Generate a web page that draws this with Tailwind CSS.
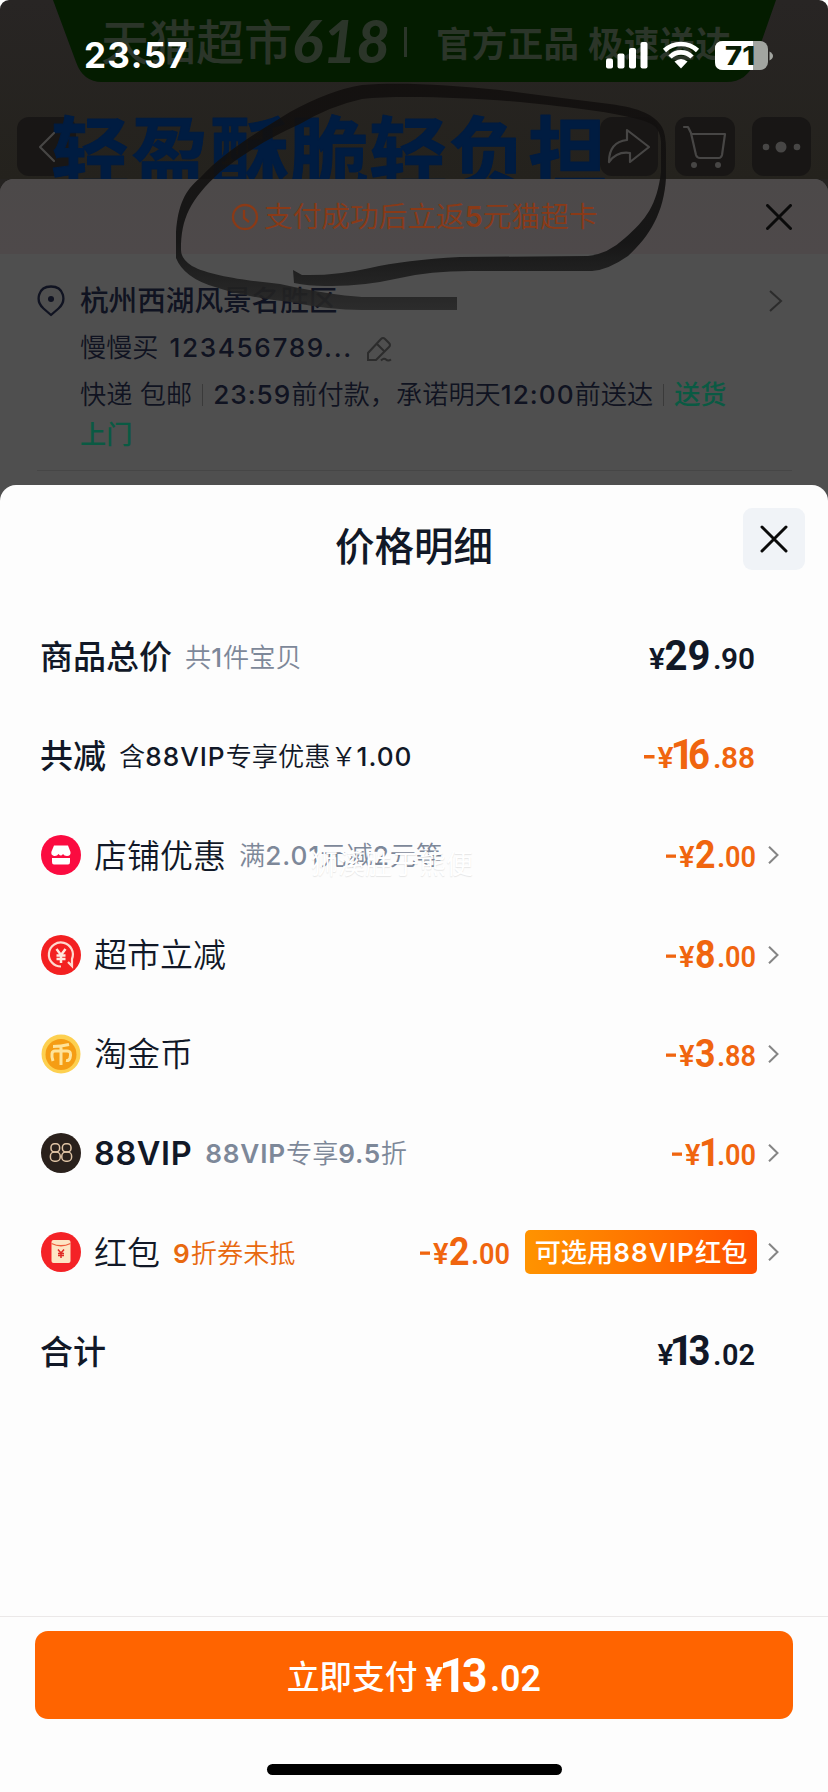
<!DOCTYPE html>
<html lang="zh-CN">
<head>
<meta charset="utf-8">
<title>价格明细</title>
<script src="https://cdn.jsdelivr.net/npm/@tailwindcss/browser@4"></script>
</head>
<body class="bg-white">
<div class="relative flex h-[1792px] w-[828px] flex-col overflow-hidden font-['Inter','Noto_Sans_CJK_SC',sans-serif]">

  <!-- dimmed product page -->
  <header class="relative h-[179px] shrink-0 overflow-hidden rounded-t-[9px] bg-linear-to-b from-[#282524] to-[#24221d]">
    <svg class="absolute inset-0" width="828" height="179" viewBox="0 0 828 179">
      <path d="M53 0L76 62Q83 82 102 82H726Q748 82 755 60L776 0Z" fill="#041c00"/>
      <g fill="#2b3529" font-family="'Noto Sans CJK SC',sans-serif" font-weight="500">
        <text x="101" y="60" font-size="48" textLength="191">天猫超市</text>
        <text x="292" y="63" font-size="59" font-style="italic" font-weight="900" font-family="Lato,sans-serif" textLength="98" lengthAdjust="spacingAndGlyphs">618</text>
        <rect x="404" y="27" width="3" height="30"/>
        <text x="436" y="57" font-size="35.5" font-weight="700" textLength="295">官方正品 极速送达</text>
      </g>
      <g fill="#131212" fill-opacity=".72">
        <rect x="17" y="117" width="59" height="59" rx="12"/>
        <rect x="600" y="117" width="58" height="59" rx="12"/>
        <rect x="675" y="117" width="60" height="59" rx="12"/>
        <rect x="752" y="117" width="59" height="59" rx="12"/>
      </g>
      <text x="51" y="183" font-size="79" font-weight="700" font-family="'Noto Sans CJK SC',sans-serif" textLength="556" fill="#001c41" stroke="#001c41" stroke-width="1" stroke-linejoin="round">轻盈酥脆轻负担</text>
      <g fill="none" stroke="#474645" stroke-width="2.200" stroke-linejoin="round" stroke-linecap="round">
        <path d="M54 133L40 147L54 161"/>
        <path d="M627 130L649 147L630 162V153Q617 151 609 162Q609 142 627 140Z"/>
        <path d="M684 127H688L691 133L696 155Q697 158 700 158H719Q721 158 722 155L725 134H691"/>
      </g>
      <g fill="#474645"><circle cx="694" cy="165" r="3"/><circle cx="718" cy="165" r="3"/><circle cx="766" cy="147" r="3.3"/><circle cx="781" cy="147" r="5.5"/><circle cx="797" cy="147" r="3.3"/></g>
    </svg>
    <div class="relative flex h-[111px] items-center justify-between pr-[55px] pl-[84px] text-white">
      <span class="text-[35px] leading-none font-bold tracking-[1.1px]">23:57</span>
      <svg width="167" height="30" viewBox="0 0 167 30" fill="#fff">
        <rect x="0" y="17.500" width="7" height="10" rx="2"/><rect x="11.500" y="12.500" width="7" height="15" rx="2"/><rect x="23" y="7" width="7" height="20.500" rx="2"/><rect x="34.500" y="1" width="7" height="26.500" rx="2"/>
        <g fill="none" stroke="#fff" stroke-width="4.600"><path d="M58.500 9.500A24 24 0 0 1 91.500 9.500"/><path d="M64 16A15.500 15.500 0 0 1 86 16"/></g>
        <path d="M68.500 20.500Q75 15.500 81.500 20.500L75 27.500Z"/>
        <path d="M163.500 10.500Q167 12.500 167 15T163.500 19.500Z" fill="#a2a5a0"/>
        <rect x="109" y="0" width="53" height="29" rx="8" fill="#a2a5a0"/>
        <path d="M147 0H117Q109 0 109 8V21Q109 29 117 29H147Z"/>
        <text x="119" y="23.500" font-size="26" font-weight="800" font-family="Inter,sans-serif" fill="#0a1f06" textLength="30" lengthAdjust="spacingAndGlyphs">71</text>
      </svg>
    </div>
  </header>

  <section class="h-[330px] shrink-0 bg-[#252321]">
    <div class="h-full rounded-t-[14px] bg-[#4f4f4f]">
      <div class="flex h-[75px] items-center rounded-t-[14px] bg-linear-to-b from-[#4c4949] to-[#4e494a] pr-[36px] pl-[231px] text-[#8a3a17]">
        <svg width="28" height="28" viewBox="0 0 28 28" fill="none" stroke="currentColor" stroke-width="2.300"><circle cx="14" cy="14" r="12"/><path d="M13 7V15L18 19"/></svg>
        <span class="ml-[5px] pt-px text-[28.700px] leading-none font-[350] whitespace-nowrap">支付成功后立返<b class="font-semibold">5</b>元猫超卡</span>
        <svg class="ml-auto" width="26" height="26" viewBox="0 0 26 26" stroke="#0a0a0a" stroke-width="3" stroke-linecap="round"><path d="M1.500 1.500L24.500 24.500M24.500 1.500L1.500 24.500"/></svg>
      </div>
      <div class="ml-[37px] flex h-[217px] w-[755px] border-b border-[#464646] pt-[23px] text-[#101321]">
        <svg class="mt-[8px]" width="28" height="32" viewBox="0 0 28 32" fill="none" stroke="currentColor" stroke-width="2.300" stroke-linejoin="round"><path d="M14 30L6.500 23.500C-2 16 1 1.500 14 1.500S30 16 21.500 23.500Z"/><circle cx="14" cy="14" r="3" fill="currentColor" stroke="none"/></svg>
        <div class="ml-[15px] flex-1">
          <div class="flex h-[48px] items-center text-[28.600px] leading-none font-medium">杭州西湖风景名胜区
            <svg class="mr-[9px] ml-auto" width="14" height="22" viewBox="0 0 14 22" fill="none" stroke="#2c2c2c" stroke-width="2"><path d="M1 1L12 11L1 21"/></svg>
          </div>
          <div class="flex h-[47px] items-center text-[26.200px] leading-none font-[350]">慢慢买<span class="ml-[11px] font-medium tracking-[1.600px]">123456789...</span>
            <svg class="ml-[13px]" width="26" height="26" viewBox="0 0 26 26" fill="none" stroke="#2c2c2c" stroke-width="2"><path d="M2 24V17L15 3Q17 1 19 3L23 7Q25 9 23 11L10 24ZM11 8L18 15M15 24.500Q18 21.500 20 23.500T25 23.500"/></svg>
          </div>
          <div class="flex h-[46px] items-center text-[26.200px] leading-none font-[350] whitespace-nowrap">快递 包邮<i class="mx-[10px] h-[22px] w-px bg-[#3a3a3a]"></i><span><b class="font-medium tracking-[1px]">23:59</b>前付款，承诺明天<b class="font-medium tracking-[1px]">12:00</b>前送达</span><i class="mx-[10px] h-[22px] w-px bg-[#3a3a3a]"></i><span class="font-medium text-[#0a5a43]">送货</span></div>
          <div class="pt-[4px] text-[26.200px] leading-none font-medium text-[#0a5a43]">上门</div>
        </div>
      </div>
    </div>
  </section>

  <!-- hand-drawn loop over the notice -->
  <svg class="absolute top-0 left-0" width="828" height="485" viewBox="0 0 828 485" fill="none">
    <defs><linearGradient id="ink" x1="0" y1="84" x2="0" y2="310" gradientUnits="userSpaceOnUse"><stop offset="0" stop-color="#120f0e"/><stop offset=".7" stop-color="#111"/><stop offset="1" stop-color="#282828"/></linearGradient></defs>
    <path fill="url(#ink)" fill-opacity=".9" fill-rule="evenodd" d="M293 270L302 275Q335 276 370 268T460 257L588 256Q608 254 625 238C646 220 657 205 661 172L661 142Q660 127 649 123C630 114 570 107 520 102C470 98 400 95 362 99Q330 106 300 124Q255 144 220 172C190 200 181 218 181 250Q181 259 192 266C210 276 250 281 280 284Q330 295 362 297H457V310H362Q330 310 290 302Q245 297 215 287Q184 278 176 258V232C178 205 185 190 200 178C225 150 265 128 290 112Q330 90 362 85C400 82 450 85 500 90Q560 98 610 104C640 108 655 115 662 127Q666 134 666 150V178C664 212 650 236 628 256Q608 270 592 271H470Q430 271 400 278Q360 287 325 286Q308 286 294 283Z"/>
  </svg>

  <!-- price sheet -->
  <main class="absolute inset-x-0 top-[485px] flex h-[1307px] flex-col rounded-t-[16px] bg-[#fdfdfd] text-[#111827]">
    <div class="grid h-[122px] shrink-0 grid-cols-[1fr_auto_1fr] items-center px-[23px]">
      <span></span>
      <h1 class="pt-[4px] text-[39.500px] leading-none font-medium">价格明细</h1>
      <div class="mb-[15px] flex h-[62px] w-[62px] items-center justify-center justify-self-end rounded-[9px] bg-[#f0f3f7]">
        <svg width="28" height="28" viewBox="0 0 28 28" stroke="#0a0a0a" stroke-width="3" stroke-linecap="round"><path d="M2 2L26 26M26 2L2 26"/></svg>
      </div>
    </div>

    <div class="flex flex-col pr-[49px] pl-[41px] whitespace-nowrap">
      <div class="flex h-[99.300px] items-center leading-none">
        <span class="-ml-px pt-[2px] text-[33px] font-medium">商品总价</span>
        <span class="ml-[13px] pt-[2px] text-[26.200px] font-[350] text-[#7d8899]">共<b class="font-medium tracking-[1px]">1</b>件宝贝</span>
        <svg class="mr-[24px] ml-auto overflow-visible" width="110" height="40" viewBox="0 1 110 40" fill="currentColor" font-family="Roboto" font-weight="600" font-size="30"><text x="4" y="33" textLength="16" lengthAdjust="spacingAndGlyphs">¥</text><text x="19.500" y="34" font-size="42" font-weight="700" textLength="46" lengthAdjust="spacingAndGlyphs">29</text><text x="68" y="33">.</text><text x="76" y="33" textLength="34" lengthAdjust="spacingAndGlyphs">90</text></svg>
      </div>
      <div class="flex h-[99.300px] items-center leading-none">
        <span class="-ml-px pt-[2px] text-[33px] font-medium">共减</span>
        <span class="ml-[13px] pt-[2px] text-[26.200px] font-[350]">含<b class="font-medium tracking-[1px]">88VIP</b>专享优惠￥<b class="font-medium tracking-[1px]">1.00</b></span>
        <svg class="mr-[24px] ml-auto overflow-visible text-[#f0650f]" width="114" height="40" viewBox="-4 1 114 40" fill="currentColor" font-family="Roboto" font-weight="600" font-size="30"><rect x="-1" y="20" width="10.500" height="3.500"/><text x="12.500" y="33" textLength="16" lengthAdjust="spacingAndGlyphs">¥</text><text x="25.500" y="34" font-size="42" font-weight="700">1</text><text x="43" y="34" font-size="42" font-weight="700" textLength="22" lengthAdjust="spacingAndGlyphs">6</text><text x="68" y="33">.</text><text x="76" y="33" textLength="34" lengthAdjust="spacingAndGlyphs">88</text></svg>
      </div>
      <div class="relative flex h-[99.300px] items-center leading-none">
        <svg width="40" height="40" viewBox="0 0 40 40"><circle cx="20" cy="20" r="20" fill="#fb0b40"/><path d="M13 10.500H27L29.500 17Q30 21 26 21Q23 21 22 19Q20 22 17.500 19Q16 21.500 13 21Q9.500 20 10.500 16.500ZM11 23H29V27Q29 29.500 27 29.500H13Q11 29.500 11 27Z" fill="#fff"/></svg>
        <span class="ml-[13px] pt-[2px] text-[33px] font-[350]">店铺优惠</span>
        <span class="ml-[13px] pt-[2px] text-[26.200px] font-[350] text-[#7d8899]">满<b class="font-medium tracking-[1px]">2.01</b>元减<b class="font-medium tracking-[1px]">2</b>元等</span>
        <span class="absolute top-[45px] left-[270px] text-[27px] font-normal text-white [text-shadow:0_1px_1px_#00000018]">狮溪胜于熊便</span>
        <svg class="ml-auto overflow-visible text-[#f0650f]" width="90" height="40" viewBox="0 1 90 40" fill="currentColor" font-family="Roboto" font-weight="600" font-size="29"><rect x="0" y="20.500" width="10" height="3.300"/><text x="13" y="32.500" textLength="15.500" lengthAdjust="spacingAndGlyphs">¥</text><text x="29" y="34" font-size="39" font-weight="700" textLength="20.500" lengthAdjust="spacingAndGlyphs">2</text><text x="51" y="32.500">.</text><text x="59" y="32.500" textLength="31" lengthAdjust="spacingAndGlyphs">00</text></svg>
        <svg class="ml-[12px]" width="11" height="18" viewBox="0 0 11 18" fill="none" stroke="#858585" stroke-width="2"><path d="M1 .7L9.500 9L1 17.300"/></svg>
      </div>
      <div class="flex h-[99.300px] items-center leading-none">
        <svg width="40" height="40" viewBox="0 0 40 40"><circle cx="20" cy="20" r="20" fill="#f32021"/><path d="M20 31.500A12 12 0 1 1 31 24V31L27 27" fill="none" stroke="#ffd9cf" stroke-width="2.200"/><path d="M15.500 14L20 20L24.500 14M15.500 20.500H24.500M15.500 24H24.500M20 20V28" fill="none" stroke="#ffe8df" stroke-width="2.500"/></svg>
        <span class="ml-[13px] pt-[2px] text-[33px] font-[350]">超市立减</span>
        <svg class="ml-auto overflow-visible text-[#f0650f]" width="90" height="40" viewBox="0 1 90 40" fill="currentColor" font-family="Roboto" font-weight="600" font-size="29"><rect x="0" y="20.500" width="10" height="3.300"/><text x="13" y="32.500" textLength="15.500" lengthAdjust="spacingAndGlyphs">¥</text><text x="29" y="34" font-size="39" font-weight="700" textLength="20.500" lengthAdjust="spacingAndGlyphs">8</text><text x="51" y="32.500">.</text><text x="59" y="32.500" textLength="31" lengthAdjust="spacingAndGlyphs">00</text></svg>
        <svg class="ml-[12px]" width="11" height="18" viewBox="0 0 11 18" fill="none" stroke="#858585" stroke-width="2"><path d="M1 .7L9.500 9L1 17.300"/></svg>
      </div>
      <div class="flex h-[99.300px] items-center leading-none">
        <svg width="40" height="40" viewBox="0 0 40 40"><circle cx="20" cy="20" r="19.500" fill="#fdd050"/><circle cx="20" cy="20.500" r="15.500" fill="#f59d14"/><path d="M12 12.500Q20 12.500 28 10.500M20 12V31M12 27Q9 17 14 17H26Q31 17 29 24Q28 27 25 26.500" fill="none" stroke="#fee39a" stroke-width="3"/></svg>
        <span class="ml-[13px] pt-[2px] text-[33px] font-[350]">淘金币</span>
        <svg class="ml-auto overflow-visible text-[#f0650f]" width="90" height="40" viewBox="0 1 90 40" fill="currentColor" font-family="Roboto" font-weight="600" font-size="29"><rect x="0" y="20.500" width="10" height="3.300"/><text x="13" y="32.500" textLength="15.500" lengthAdjust="spacingAndGlyphs">¥</text><text x="29" y="34" font-size="39" font-weight="700" textLength="20.500" lengthAdjust="spacingAndGlyphs">3</text><text x="51" y="32.500">.</text><text x="59" y="32.500" textLength="31" lengthAdjust="spacingAndGlyphs">88</text></svg>
        <svg class="ml-[12px]" width="11" height="18" viewBox="0 0 11 18" fill="none" stroke="#858585" stroke-width="2"><path d="M1 .7L9.500 9L1 17.300"/></svg>
      </div>
      <div class="flex h-[99.300px] items-center leading-none">
        <svg width="40" height="40" viewBox="0 0 40 40"><circle cx="20" cy="20" r="20" fill="#2a211c"/><g fill="none" stroke="#dfc3a4" stroke-width="1.500"><rect x="10" y="10.700" width="8.600" height="8.300" rx="3.500"/><rect x="9.400" y="19" width="9.800" height="9.200" rx="4"/><rect x="21.400" y="10.700" width="8.600" height="8.300" rx="3.500"/><rect x="20.800" y="19" width="9.800" height="9.200" rx="4"/></g></svg>
        <span class="ml-[13px] pt-[2px] text-[32.500px] font-semibold tracking-[.6px]">88VIP</span>
        <span class="ml-[13px] pt-[2px] text-[26.200px] font-[350] text-[#7d8899]"><b class="font-semibold tracking-[.8px]">88VIP</b>专享<b class="font-semibold tracking-[.6px]">9.5</b>折</span>
        <svg class="ml-auto overflow-visible text-[#f0650f]" width="90" height="40" viewBox="0 1 90 40" fill="currentColor" font-family="Roboto" font-weight="600" font-size="29"><rect x="6" y="20.500" width="10" height="3.300"/><text x="19" y="32.500" textLength="15.500" lengthAdjust="spacingAndGlyphs">¥</text><text x="33" y="34" font-size="39" font-weight="700" textLength="21" lengthAdjust="spacingAndGlyphs">1</text><text x="51" y="32.500">.</text><text x="59" y="32.500" textLength="31" lengthAdjust="spacingAndGlyphs">00</text></svg>
        <svg class="ml-[12px]" width="11" height="18" viewBox="0 0 11 18" fill="none" stroke="#858585" stroke-width="2"><path d="M1 .7L9.500 9L1 17.300"/></svg>
      </div>
      <div class="flex h-[99.300px] items-center leading-none">
        <svg width="40" height="40" viewBox="0 0 40 40"><circle cx="20" cy="20" r="20" fill="#f42226"/><rect x="10.500" y="8" width="19" height="23" rx="2" fill="#fde5c4"/><path d="M10.500 11.500Q20 16 29.500 11.500" fill="none" stroke="#ee5a3a" stroke-width="1.300"/><path d="M17 17.500L20 21L23 17.500M17 21.500H23M17 23.500H23M20 21V26" fill="none" stroke="#e02a25" stroke-width="1.500"/></svg>
        <span class="ml-[13px] pt-[2px] text-[33px] font-[350]">红包</span>
        <span class="ml-[13px] pt-[3px] text-[26.200px] font-[350] text-[#e8690f]"><b class="font-semibold tracking-[1px]">9</b>折券未抵</span>
        <svg class="ml-auto overflow-visible text-[#f0650f]" width="90" height="40" viewBox="0 1 90 40" fill="currentColor" font-family="Roboto" font-weight="600" font-size="29"><rect x="0" y="20.500" width="10" height="3.300"/><text x="13" y="32.500" textLength="15.500" lengthAdjust="spacingAndGlyphs">¥</text><text x="29" y="34" font-size="39" font-weight="700" textLength="20.500" lengthAdjust="spacingAndGlyphs">2</text><text x="51" y="32.500">.</text><text x="59" y="32.500" textLength="31" lengthAdjust="spacingAndGlyphs">00</text></svg>
        <span class="ml-[15px] flex h-[44px] w-[232px] items-center justify-center rounded-[5px] bg-linear-to-r from-[#ff9300] to-[#ff4e00] pt-px text-[26.200px] font-medium text-white">可选用<b class="font-semibold tracking-[1px]">88VIP</b>红包</span>
        <svg class="ml-[11px]" width="11" height="18" viewBox="0 0 11 18" fill="none" stroke="#858585" stroke-width="2"><path d="M1 .7L9.500 9L1 17.300"/></svg>
      </div>
      <div class="flex h-[99.300px] items-center leading-none">
        <span class="-ml-px pt-[2px] text-[33px] font-medium">合计</span>
        <svg class="mr-[24px] ml-auto overflow-visible" width="110" height="40" viewBox="0 1 110 40" fill="currentColor" font-family="Roboto" font-weight="600" font-size="30"><text x="12.500" y="33.500" textLength="16" lengthAdjust="spacingAndGlyphs">¥</text><text x="24.500" y="34" font-size="42" font-weight="700">1</text><text x="43.500" y="34" font-size="42" font-weight="700" textLength="22" lengthAdjust="spacingAndGlyphs">3</text><text x="68" y="33.500">.</text><text x="77" y="33.500" textLength="33" lengthAdjust="spacingAndGlyphs">02</text></svg>
      </div>
    </div>

    <footer class="mt-auto flex h-[176px] flex-col items-center border-t border-[#ebe8e8] pt-[14px]">
      <button class="flex h-[88px] w-[758px] items-center justify-center rounded-[13px] bg-[#ff6400] leading-none text-white">
        <span class="pt-[4px] text-[32.700px] font-medium">立即支付</span>
        <svg class="ml-[6px] overflow-visible" width="118" height="50" viewBox="0 0 118 50" fill="currentColor" font-family="Roboto" font-weight="600" font-size="36"><text x="2" y="40.500" textLength="18" lengthAdjust="spacingAndGlyphs" font-size="34">¥</text><text x="16" y="41.500" font-size="49" font-weight="700">1</text><text x="39" y="41.500" font-size="49" font-weight="700" textLength="25.500" lengthAdjust="spacingAndGlyphs">3</text><text x="67" y="40.500">.</text><text x="77" y="40.500" textLength="41" lengthAdjust="spacingAndGlyphs">02</text></svg>
      </button>
      <div class="mt-[45px] h-[11px] w-[295px] rounded-full bg-black"></div>
    </footer>
  </main>
</div>
</body>
</html>
